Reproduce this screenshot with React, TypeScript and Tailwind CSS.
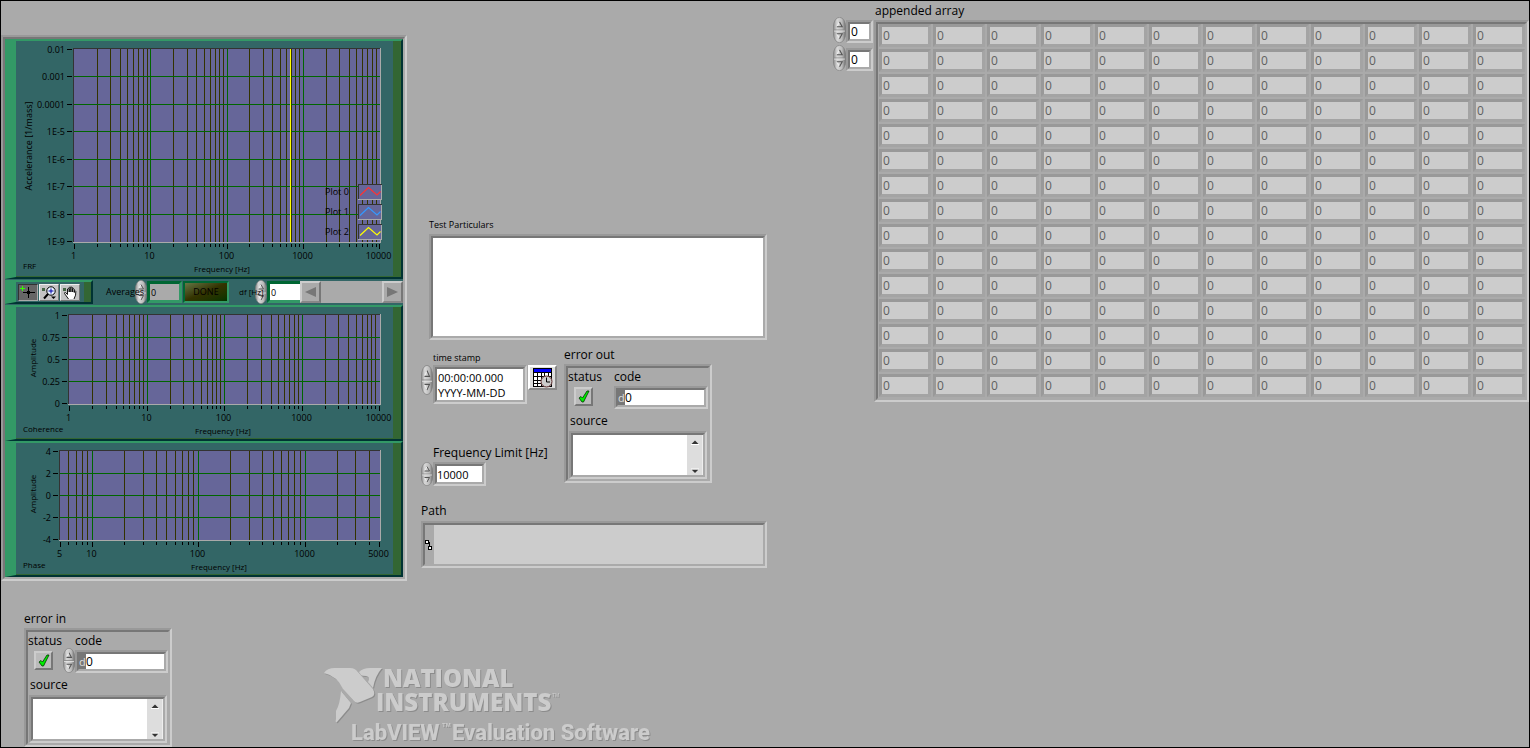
import type { ReactNode } from "react";

const FONT = '"Open Sans", "Noto Sans", sans-serif';

type ChartProps = {
  height: number;
  left: number;
  right: number;
  top: number;
  bottom: number;
  xMin: number;
  xMax: number;
  yTicks: string[];
  yTitle: string;
  yTitleSize: number;
  yTitleX: number;
  yTitleY: number;
  name: string;
  nameY: number;
  xTitleX: number;
  children?: ReactNode;
};

function logTicks(min: number, max: number) {
  const ticks: { value: number; major: boolean }[] = [];
  for (let decade = 1; decade <= max; decade *= 10) {
    for (let k = 1; k < 10; k++) {
      const value = k * decade;
      if (value >= min && value <= max) {
        ticks.push({ value, major: k === 1 });
      }
    }
  }
  return ticks;
}

function Chart(props: ChartProps) {
  const { height, left, right, top, bottom, xMin, xMax, yTicks } = props;
  const x0 = left + 1;
  const x1 = right - 1;
  const y0 = top + 1;
  const y1 = bottom - 1;
  const px = (v: number) =>
    Math.round(x0 + ((x1 - x0) * Math.log(v / xMin)) / Math.log(xMax / xMin)) + 0.5;
  const py = (i: number) => Math.round(y0 + ((y1 - y0) * i) / (yTicks.length - 1)) + 0.5;
  const ticks = logTicks(xMin, xMax);
  const inner = ticks.filter((t) => t.value > xMin && t.value < xMax);
  const labelled = ticks.filter((t) => t.major || t.value === xMin || t.value === xMax);

  return (
    <div className="border-t-2 border-r-2 border-b-2 border-l-[11px] border-t-[#339966] border-r-[#003333] border-b-[#003333] border-l-[#339966]">
      <div className="border-r-8 border-b border-[#336633] bg-[#336666]">
        <svg
          viewBox={`0 0 377 ${height}`}
          className="block h-auto w-full"
          role="img"
          aria-label={props.name}
          fontFamily={FONT}
          fontSize="9"
        >
          <g shapeRendering="crispEdges">
            <rect x={left} y={top} width={right - left} height={bottom - top} fill="#666699" />
            {inner
              .filter((t) => !t.major)
              .map((t) => (
                <path key={t.value} d={`M${px(t.value)} ${top}V${bottom}`} stroke="#333300" />
              ))}
            {yTicks.slice(1, -1).map((label, i) => (
              <path key={label} d={`M${left} ${py(i + 1)}H${right}`} stroke="#006600" />
            ))}
            {inner
              .filter((t) => t.major)
              .map((t) => (
                <path key={t.value} d={`M${px(t.value)} ${top}V${bottom}`} stroke="#006600" />
              ))}
            <path d={`M${left + 0.5} ${bottom}V${top + 0.5}H${right}`} stroke="#333333" fill="none" />
            <path d={`M${left} ${bottom + 0.5}H${right + 0.5}V${top}`} stroke="#aaaaaa" fill="none" />
            {ticks.map((t) => (
              <path
                key={t.value}
                d={`M${px(t.value)} ${bottom + 2}v${labelled.includes(t) ? 5 : 3}`}
                stroke="#000"
              />
            ))}
            {yTicks.map((label, i) => (
              <path key={label} d={`M${left - 6} ${py(i)}h5`} stroke="#000" />
            ))}
          </g>
          {labelled.map((t) => (
            <text key={t.value} x={px(t.value) - 1} y={bottom + 17} textAnchor="middle">
              {t.value}
            </text>
          ))}
          {yTicks.map((label, i) => (
            <text key={label} x={left - 8} y={py(i) + 3} textAnchor="end">
              {label}
            </text>
          ))}
          <text x={props.xTitleX} y={bottom + 30} textAnchor="middle" fontSize="8">
            Frequency [Hz]
          </text>
          <text x="7" y={props.nameY} fontSize="8">
            {props.name}
          </text>
          <text
            transform={`translate(${props.yTitleX} ${props.yTitleY}) rotate(-90)`}
            textAnchor="middle"
            fontSize={props.yTitleSize}
          >
            {props.yTitle}
          </text>
          {props.children}
        </svg>
      </div>
    </div>
  );
}

function Legend() {
  const plots = ["#ff3333", "#3399ff", "#ffff00"];
  return (
    <g>
      {plots.map((color, i) => (
        <g key={color} transform={`translate(0 ${143 + 20 * i})`}>
          <text x="309" y="11">
            Plot {i}
          </text>
          <g shapeRendering="crispEdges" fill="none">
            <rect x="343" y="1" width="22" height="14" fill="#666699" />
            <path d="M342.500 16V.5H366" stroke="#333333" />
            <path d="M342 15.500H365.500V1" stroke="#aaaaaa" />
          </g>
          <path d="M344 11.500L352.500 3.500L361 11L364.500 7.500" stroke={color} strokeWidth="1.200" fill="none" />
        </g>
      ))}
    </g>
  );
}

function Sunken({ className = "", children }: { className?: string; children: ReactNode }) {
  return (
    <div className={`border-2 border-t-[#999999] border-r-[#cccccc] border-b-[#cccccc] border-l-[#999999] ${className}`}>
      <div className="h-full border-2 border-t-[#777777] border-r-[#aaaaaa] border-b-[#aaaaaa] border-l-[#777777]">
        {children}
      </div>
    </div>
  );
}

function Spinner({ className = "h-6 w-3", label }: { className?: string; label: string }) {
  return (
    <button type="button" aria-label={label} className={`shrink-0 ${className}`}>
      <svg viewBox="0 0 12 24" preserveAspectRatio="none" className="block h-full w-full">
        <defs>
          <linearGradient id="knob" x1="0" x2="1">
            <stop offset="0" stopColor="#888888" />
            <stop offset=".3" stopColor="#d8d8d8" />
            <stop offset=".7" stopColor="#bcbcbc" />
            <stop offset="1" stopColor="#6c6c6c" />
          </linearGradient>
        </defs>
        <rect x=".3" y=".3" width="11.400" height="23.400" rx="5.700" ry="9" fill="url(#knob)" stroke="#7c7c7c" strokeWidth=".6" />
        <path d="M1 12H11" stroke="#888888" strokeWidth=".8" />
        <path d="M1 13H11" stroke="#e4e4e4" strokeWidth=".8" />
        <path d="M3.500 9L6 4.500M3.500 15.500L6 20" stroke="#eeeeee" fill="none" />
        <path d="M6 4.500L8.500 9H3.500M3.500 15.500h5L6 20" stroke="#555555" fill="none" />
      </svg>
    </button>
  );
}

function ToolButton({ label, pressed, children }: { label: string; pressed?: boolean; children: ReactNode }) {
  return (
    <button
      type="button"
      aria-label={label}
      aria-pressed={!!pressed}
      className={
        pressed
          ? "h-[17px] w-5 shrink-0 border border-t-[#333333] border-r-[#aaaaaa] border-b-[#aaaaaa] border-l-[#333333] bg-[#666666]"
          : "h-[17px] w-5 shrink-0 border border-t-[#eeeeee] border-r-[#777777] border-b-[#777777] border-l-[#eeeeee] bg-[#c4c4c4]"
      }
    >
      <svg viewBox="0 0 18 15" className="block h-[15px] w-[18px]">
        {children}
      </svg>
    </button>
  );
}

function GraphTools() {
  return (
    <div className="flex h-[26px] items-center bg-[#336666]">
      <div className="flex h-6 w-[88px] items-center gap-px border-t-2 border-r-2 border-b-2 border-l-[11px] border-t-[#339966] border-r-[#003333] border-b-[#003333] border-l-[#339966] bg-[#336666] pl-0.5">
        <ToolButton label="Cursor" pressed>
          <path d="M9.500 2v11M4 7.500h12" stroke="#000" shapeRendering="crispEdges" />
          <rect x="8" y="6" width="3" height="3" fill="#000" />
          <path d="M1 3.500h5M3.500 1v5" stroke="#33ff00" />
        </ToolButton>
        <ToolButton label="Zoom">
          <rect x="2" y="3" width="3" height="3" fill="#446644" />
          <circle cx="11" cy="6" r="4.200" fill="#e8f4ff" stroke="#000" />
          <path d="M8.500 6h5M11 3.500v5" stroke="#0000aa" />
          <path d="M8 9l-4 4.500" stroke="#000" strokeWidth="2" />
          <path d="M11 11.500h5l-2.500 2.500z" />
        </ToolButton>
        <ToolButton label="Pan">
          <rect x="2" y="3" width="3" height="3" fill="#446644" />
          <path
            d="M7.500 14L3.500 8.500q-.2-1.300 1.200-.8L6.500 9.500V4q.7-1.300 1.700 0V7V2.500q.8-1.300 1.700 0V7V2.500q1-1 1.800.2V7V4q1-.8 1.600.3V7.500V6q1-.7 1.500.5Q15.200 10 13 14"
            fill="#fff"
            stroke="#000"
            strokeWidth=".9"
          />
        </ToolButton>
        <div className="ml-auto w-[7px] self-stretch bg-[#336633]" />
      </div>
      <label htmlFor="averages" className="z-20 ml-[13px] w-[29px] text-[9px] whitespace-nowrap">
        Averages
      </label>
      <Spinner label="Change averages" className="z-10 h-6 w-3" />
      <div className="h-[22px] w-[35px] border-[3px] border-t-[#006633] border-r-[#339966] border-b-[#339966] border-l-[#006633]">
        <input id="averages" defaultValue="0" className="block h-full w-full bg-[#aaaaaa] px-px text-[9px] outline-none" />
      </div>
      <button
        type="button"
        className="ml-px h-[22px] w-[46px] border-2 border-t-[#006633] border-r-[#339966] border-b-[#339966] border-l-[#006633] bg-linear-to-br from-[#667744] via-[#333300] to-[#003300] text-center text-[9px] leading-[18px]"
      >
        DONE
      </button>
      <label htmlFor="df" className="z-20 ml-2.5 w-4 text-[8px] whitespace-nowrap">
        df [Hz]
      </label>
      <Spinner label="Change df" className="z-10 h-6 w-3" />
      <div className="h-[22px] w-[33px] border-y-[3px] border-l-[3px] border-t-[#006633] border-b-[#339966] border-l-[#006633]">
        <input id="df" defaultValue="0" className="block h-full w-full bg-white px-px text-[9px] outline-none" />
      </div>
      <div className="flex h-[22px] flex-1 bg-[#aaaaaa]">
        <button type="button" aria-label="Scroll left" className="w-[21px] border-2 border-t-[#cccccc] border-r-[#777777] border-b-[#888888] border-l-[#cccccc]">
          <svg viewBox="0 0 17 18" className="block h-full w-full">
            <path d="M14 4v10L3 9z" fill="#777777" />
          </svg>
        </button>
        <div className="flex-1" />
        <button type="button" aria-label="Scroll right" className="w-[21px] border-2 border-t-[#cccccc] border-r-[#777777] border-b-[#888888] border-l-[#cccccc]">
          <svg viewBox="0 0 17 18" className="block h-full w-full">
            <path d="M3 4v10l11-5z" fill="#777777" />
          </svg>
        </button>
      </div>
    </div>
  );
}

function SourceBox({ id }: { id: string }) {
  return (
    <Sunken className="mx-px mt-px h-12">
      <div className="flex h-full bg-white">
        <textarea id={id} className="block h-full min-w-0 flex-1 resize-none px-px text-[11px] outline-none" />
        <div className="flex w-4 flex-col justify-between border-r border-[#eeeeee] bg-[#dddddd] py-px">
          <button type="button" aria-label="Scroll up" className="flex h-3 justify-center">
            <svg viewBox="0 0 10 10" className="block h-2.5 w-2.5">
              <path d="M1.500 8L5 4.500L8.500 8z" fill="#333333" />
              <path d="M1 8.500h8" stroke="#fff" />
            </svg>
          </button>
          <button type="button" aria-label="Scroll down" className="flex h-3 items-end justify-center">
            <svg viewBox="0 0 10 10" className="block h-2.5 w-2.5">
              <path d="M1.500 5.500h7L5 9z" fill="#333333" />
              <path d="M1 5h8" stroke="#fff" />
            </svg>
          </button>
        </div>
      </div>
    </Sunken>
  );
}

function ErrorCluster({ title, prefix, editable, className }: { title: string; prefix: string; editable?: boolean; className: string }) {
  return (
    <section className={className}>
      <h2 className="text-xs leading-[18px]">{title}</h2>
      <Sunken className="h-[119px]">
        <div className="flex">
          <div className={editable ? "w-[35px]" : "w-[46px]"}>
            <div className="text-xs leading-[18px]">status</div>
            <div className="mt-px ml-1.5 flex h-[19px] w-[19px] items-center justify-center border-2 border-t-[#cccccc] border-r-[#777777] border-b-[#777777] border-l-[#cccccc] bg-[#bbbbbb]">
              <svg viewBox="0 0 12 13" className="block h-[13px] w-3" role="img" aria-label="No error">
                <path d="M1 8l2-1.500 1.500 1.500L9 1h2L5.500 12H4z" fill="#00ee00" stroke="#003300" strokeWidth=".8" />
              </svg>
            </div>
          </div>
          {editable && <Spinner label="Change code" className="mt-4 h-[25px] w-3" />}
          <div className="min-w-0 flex-1">
            <label htmlFor={`${prefix}-code`} className="block text-xs leading-[18px]">
              code
            </label>
            <Sunken className="h-[23px]">
              <div className="flex h-full bg-white text-xs leading-[15px]">
                <span className="w-[7px] bg-[#777777] text-[11px] leading-[15px] text-[#dddddd]">d</span>
                <input id={`${prefix}-code`} defaultValue="0" readOnly={!editable} className="min-w-0 flex-1 outline-none" />
              </div>
            </Sunken>
          </div>
        </div>
        <label htmlFor={`${prefix}-source`} className="mt-[3px] block pl-0.5 text-xs leading-[18px]">
          source
        </label>
        <SourceBox id={`${prefix}-source`} />
      </Sunken>
    </section>
  );
}

function CalendarIcon() {
  return (
    <svg viewBox="0 0 20 20" className="block h-5 w-5">
      <rect x=".5" y=".5" width="18" height="18" fill="#fff" stroke="#000" shapeRendering="crispEdges" />
      <rect x="1" y="1" width="17" height="3" fill="#0000ff" />
      <path d="M1 4.500h17M1 8.500h17M1 12.500h17M1 15.500h17M4.500 4v15M8.500 4v15M11.500 4v15M15.500 4v15" stroke="#000" shapeRendering="crispEdges" />
      <circle cx="13.500" cy="13.500" r="5.500" fill="#cccccc" stroke="#663333" />
      <path d="M13.500 9.500v4.500H17" stroke="#000" fill="none" />
    </svg>
  );
}

function Brand() {
  return (
    <svg
      viewBox="0 0 336 80"
      className="block h-20 w-[336px] overflow-visible [filter:drop-shadow(1px_1px_0_#8c8c8c)]"
      role="img"
      aria-label="National Instruments LabVIEW Evaluation Software"
      fill="#cccccc"
    >
      <path d="M1 6Q4 1 12 1H27Q32 1 35 5L50 22Q53 28 49 30L37 35Q33 37 31 34L20 22Q14 9 1 6Z" />
      <path d="M36 5Q40 1 47 1H59Q52 9 50 21L45 15Q48 10 43 9Q39 9 38 8Z" />
      <path d="M18 24L28 36L26 41L14 55Q12 56 13 52V44Q17 37 18 24Z" />
      <text x="60" y="20" fontFamily='"Open Sans", sans-serif' fontWeight="800" fontSize="24">
        NATIONAL
      </text>
      <text x="53" y="44" fontFamily='"Open Sans", sans-serif' fontWeight="800" fontSize="24">
        INSTRUMENTS
      </text>
      <text x="229" y="30" fontFamily='"Liberation Sans", sans-serif' fontSize="5">
        TM
      </text>
      <text x="28" y="73" fontFamily='Roboto, "Liberation Sans", sans-serif' fontWeight="800" fontSize="22">
        LabVIEW
      </text>
      <text x="119" y="60" fontFamily='"Liberation Sans", sans-serif' fontWeight="700" fontSize="6">
        TM
      </text>
      <text x="129" y="73" fontFamily='Roboto, "Liberation Sans", sans-serif' fontWeight="800" fontSize="22">
        Evaluation Software
      </text>
    </svg>
  );
}

function AppendedArray() {
  const rows = Array.from({ length: 15 }, (_, i) => i);
  const columns = Array.from({ length: 12 }, (_, i) => i);
  return (
    <section className="flex">
      <div className="flex w-[41px] shrink-0 flex-col gap-0.5 pt-4">
        {["Row index", "Column index"].map((label) => (
          <div key={label} className="flex h-[26px] items-end">
            <Spinner label={`Change ${label.toLowerCase()}`} className="h-[26px] w-[13px]" />
            <Sunken className="h-[23px] w-[27px]">
              <input aria-label={label} defaultValue="0" className="block h-full w-full bg-white px-px text-xs outline-none" />
            </Sunken>
          </div>
        ))}
      </div>
      <div className="min-w-0 flex-1 pt-px">
        <h2 className="pl-px text-xs leading-[18px]">appended array</h2>
        <Sunken>
          <div className="overflow-hidden pb-px pl-px">
            <table aria-label="appended array" className="-m-0.5 w-[calc(100%+4px)] table-fixed border-separate border-spacing-0.5 text-xs leading-[17px] text-[#606060]">
              <tbody>
                {rows.map((r) => (
                  <tr key={r}>
                    {columns.map((c) => (
                      <td
                        key={c}
                        className="h-[23px] border-[3px] border-t-[#999999] border-r-[#a4a4a4] border-b-[#a4a4a4] border-l-[#999999] bg-[#cccccc] px-px py-0"
                      >
                        0
                      </td>
                    ))}
                  </tr>
                ))}
              </tbody>
            </table>
          </div>
        </Sunken>
      </div>
    </section>
  );
}

export default function App() {
  return (
    <main className="min-h-screen border border-black bg-[#aaaaaa] font-['Open_Sans','Noto_Sans',sans-serif] text-black">
      <div className="grid grid-cols-[minmax(0,407fr)_minmax(0,425fr)_minmax(0,696fr)] items-start">
        <div className="pt-[34px] pr-px">
          <Sunken>
            <Chart
              height={235}
              left={57}
              right={364}
              top={7}
              bottom={201}
              xMin={1}
              xMax={10000}
              yTicks={["0.01", "0.001", "0.0001", "1E-5", "1E-6", "1E-7", "1E-8", "1E-9"]}
              yTitle="Accelerance [1/mass]"
              yTitleSize={9}
              yTitleX={16}
              yTitleY={105}
              name="FRF"
              nameY={228}
              xTitleX={206}
            >
              <path d="M274.500 8V201" stroke="#ffff00" shapeRendering="crispEdges" />
              <Legend />
            </Chart>
            <GraphTools />
            <Chart
              height={131}
              left={52}
              right={364}
              top={7}
              bottom={97}
              xMin={1}
              xMax={10000}
              yTicks={["1", "0.75", "0.5", "0.25", "0"]}
              yTitle="Amplitude"
              yTitleSize={8}
              yTitleX={20}
              yTitleY={51}
              name="Coherence"
              nameY={125}
              xTitleX={207}
            />
            <Chart
              height={131}
              left={43}
              right={364}
              top={7}
              bottom={97}
              xMin={5}
              xMax={5000}
              yTicks={["4", "2", "0", "-2", "-4"]}
              yTitle="Amplitude"
              yTitleSize={8}
              yTitleX={20}
              yTitleY={51}
              name="Phase"
              nameY={125}
              xTitleX={203}
            />
          </Sunken>
        </div>

        <div className="pt-[217px] pr-[66px] pl-[13px]">
          <div className="pl-2">
            <label htmlFor="particulars" className="mb-0.5 block text-[9px] leading-[14px]">
              Test Particulars
            </label>
            <Sunken className="h-[106px]">
              <textarea id="particulars" className="block h-full w-full resize-none bg-white px-1 text-[11px] outline-none" />
            </Sunken>
          </div>

          <div className="mt-1.5 flex items-start">
            <div className="w-[143px] shrink-0 pt-[5px]">
              <label htmlFor="timestamp" className="block pl-3 text-[9px] leading-[14px]">
                time stamp
              </label>
              <div className="flex items-start">
                <Spinner label="Change time" className="h-[30px] w-3" />
                <Sunken className="h-[39px] w-[94px]">
                  <textarea
                    id="timestamp"
                    defaultValue={"00:00:00.000\nYYYY-MM-DD"}
                    className="block h-full w-full resize-none overflow-hidden bg-white px-px pt-px text-[11px] leading-[15px] whitespace-pre outline-none"
                  />
                </Sunken>
                <button
                  type="button"
                  aria-label="Pick date and time"
                  className="ml-px flex h-[25px] w-[29px] items-center justify-center border-2 border-t-white border-r-[#888888] border-b-[#888888] border-l-white bg-[#dddddd]"
                >
                  <CalendarIcon />
                </button>
              </div>
              <label htmlFor="limit" className="mt-10 block pl-3 text-xs leading-[18px] whitespace-nowrap">
                Frequency Limit [Hz]
              </label>
              <div className="flex items-center">
                <Spinner label="Change frequency limit" className="h-6 w-3" />
                <Sunken className="h-6 w-[53px]">
                  <input id="limit" defaultValue="10000" className="block h-full w-full bg-white text-[11px] outline-none" />
                </Sunken>
              </div>
            </div>
            <ErrorCluster title="error out" prefix="out" className="w-[148px]" />
          </div>

          <label htmlFor="path" className="mt-4 mb-px block text-xs leading-[18px]">
            Path
          </label>
          <Sunken className="h-[47px]">
            <div className="flex h-full">
              <svg viewBox="0 0 9 12" className="my-auto block h-3 w-[9px]" aria-hidden="true">
                <path d="M.5 1.500h3v3h-3zM3.500 7.500h3v3h-3z" fill="#fff" stroke="#000" shapeRendering="crispEdges" />
                <path d="M3.500 3.500h1v4" stroke="#000" fill="none" shapeRendering="crispEdges" />
              </svg>
              <input id="path" readOnly className="min-w-0 flex-1 bg-[#cccccc] px-1 text-[11px] outline-none" />
            </div>
          </Sunken>
        </div>

        <AppendedArray />
      </div>

      <div className="flex items-end pt-[29px] pl-[23px]">
        <ErrorCluster title="error in" prefix="in" editable className="w-[148px]" />
        <div className="ml-[151px]">
          <Brand />
        </div>
      </div>
    </main>
  );
}
